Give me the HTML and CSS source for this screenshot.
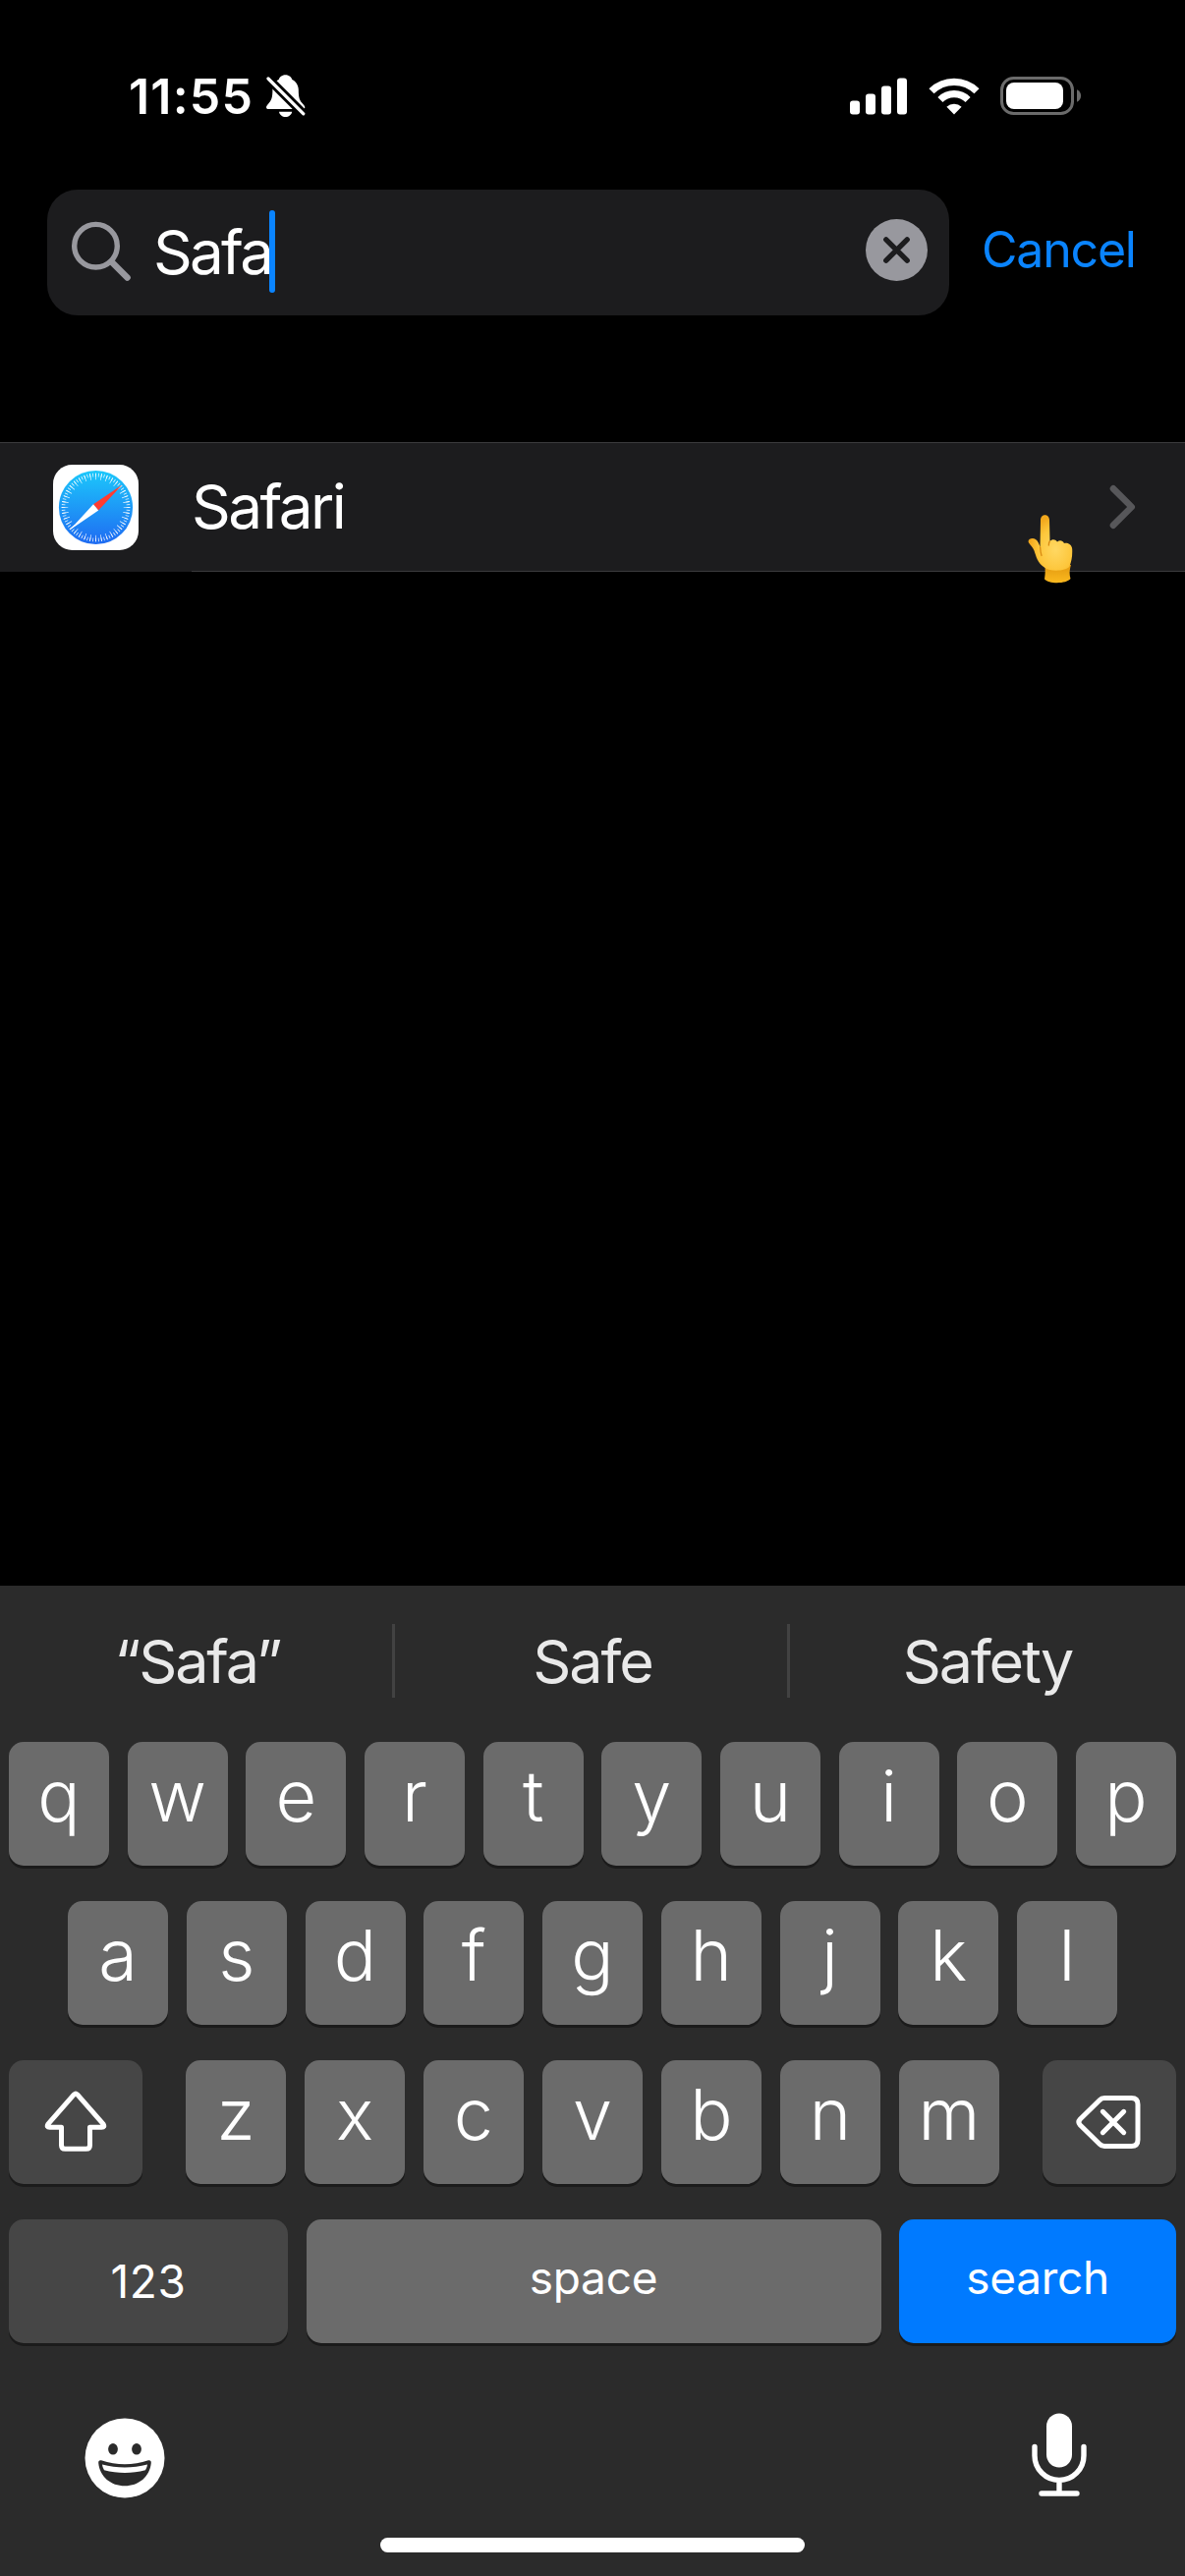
FILE: index.html
```html
<!DOCTYPE html>
<html lang="en">
<head>
<meta charset="utf-8">
<title>Settings search</title>
<link rel="stylesheet" href="styles.css">
</head>
<body>
<div class="screen">
  <header class="status">
    <span class="time">11:55</span>
    <svg class="bell" width="40" height="44" viewBox="0 0 40 44">
      <path fill="#fff" d="M19.5 0.2c-3.800 0-6.200 2.400-6.800 4.800C8.800 7 6.400 11 6.400 15.500c0 8-1.400 11-4.200 14C.6 31.300 0 32.200 0 33.200 0 34.400.8 35 2 35h35c1.200 0 2.300-.6 2.300-1.800 0-1-.6-1.900-2.300-3.700-3-3-4.200-6-4.200-14C32.700 11 30.300 7 26.300 5 25.700 2.600 23.300.2 19.500.2zM13 37.700h13.200c-.6 3.200-3.300 5.300-6.600 5.300S13.600 40.900 13 37.700z"/>
      <path stroke="#000" stroke-width="9" d="M-1 1L41 43"/>
      <path stroke="#fff" stroke-width="3.200" stroke-linecap="round" d="M2 4L37.800 39.800"/>
    </svg>
    <div class="indicators">
      <svg width="58" height="38" viewBox="0 0 58 38" fill="#fff">
        <rect x="0" y="23.500" width="10" height="14" rx="3"/>
        <rect x="16" y="16.500" width="10" height="21" rx="3"/>
        <rect x="32" y="8.500" width="10" height="29" rx="3"/>
        <rect x="48" y="0.500" width="10" height="37" rx="3"/>
      </svg>
      <svg class="wifi" width="52" height="38" viewBox="0 0 52 38">
        <g fill="none" stroke="#fff" stroke-width="7.200">
          <path d="M3 13.800a32.600 32.600 0 0 1 46 0"/>
          <path d="M11.900 22.500a20 20 0 0 1 28.200 0"/>
        </g>
        <path fill="#fff" d="M26 37.500l-7.600-7.800a11 11 0 0 1 15.200 0z"/>
      </svg>
      <svg class="battery" width="84" height="40" viewBox="0 0 84 40">
        <rect x="1.500" y="1.500" width="72" height="36" rx="12" fill="none" stroke="#6b6b6b" stroke-width="3"/>
        <rect x="6" y="6" width="58" height="27" rx="8" fill="#fff"/>
        <path fill="#6b6b6b" d="M78 13.200c2.500 1 4.100 3.400 4.100 6.300s-1.600 5.300-4.100 6.300z"/>
      </svg>
    </div>
  </header>

  <div class="search">
    <div class="field">
      <svg class="lens" width="62" height="62" viewBox="0 0 62 62" fill="none" stroke="#98989e">
        <circle cx="25.500" cy="25.200" r="21.800" stroke-width="5.400"/>
        <path d="M41.500 41.500L57.500 57.500" stroke-width="6.600" stroke-linecap="round"/>
      </svg>
      <span class="query">Safa</span>
      <span class="caret"></span>
      <svg class="clear" width="63" height="63" viewBox="0 0 63 63">
        <circle cx="31.500" cy="31.500" r="31.500" fill="#98989e"/>
        <path d="M20.800 20.800L42.200 42.200M42.200 20.800L20.800 42.200" stroke="#1c1c1e" stroke-width="5.400" stroke-linecap="round"/>
      </svg>
    </div>
    <span class="cancel">Cancel</span>
  </div>

  <main class="results">
    <div class="result">
      <svg class="app-icon" width="87" height="87" viewBox="0 0 87 87">
        <defs>
          <linearGradient id="sky" x1="0" y1="0" x2="0" y2="1">
            <stop offset="0" stop-color="#1cc8fb"/>
            <stop offset="1" stop-color="#1f6bf2"/>
          </linearGradient>
        </defs>
        <rect width="87" height="87" rx="19.500" fill="#fff"/>
        <circle cx="43.500" cy="43.500" r="37.600" fill="url(#sky)"/>
        <g fill="none" stroke="#fff" stroke-opacity="0.850">
          <circle cx="43.500" cy="43.500" r="33" stroke-width="3.600" pathLength="72" stroke-dasharray="0.280 0.720" stroke-dashoffset="0.140"/>
          <circle cx="43.500" cy="43.500" r="31.500" stroke-width="6.600" pathLength="36" stroke-dasharray="0.140 0.860" stroke-dashoffset="0.070"/>
        </g>
        <path fill="#ff3b30" d="M70.300 20.500L41 40.300 46.200 46.500z"/>
        <path fill="#fff" d="M16.900 66.500L41 40.300 46.200 46.500z"/>
      </svg>
      <div class="result-body">
        <span class="result-name">Safari</span>
        <svg class="chevron" width="28" height="46" viewBox="0 0 28 46">
          <path d="M4 4.300L22.700 23 4 41.700" fill="none" stroke="#57575a" stroke-width="6.600" stroke-linecap="round" stroke-linejoin="round"/>
        </svg>
      </div>
      <svg class="pointer" width="47" height="70" viewBox="0 0 47 70">
        <defs>
          <radialGradient id="skin" cx="0.620" cy="0.620" r="0.600">
            <stop offset="0" stop-color="#ffd863"/>
            <stop offset="0.650" stop-color="#fdc63b"/>
            <stop offset="1" stop-color="#f2a81d"/>
          </radialGradient>
          <linearGradient id="wrist" x1="0" y1="0" x2="0" y2="1">
            <stop offset="0" stop-color="#e39a10"/>
            <stop offset="1" stop-color="#fbb91f"/>
          </linearGradient>
        </defs>
        <path fill="url(#wrist)" d="M17.500 52c.3 5 .3 8-.5 13.500 4 5 22.500 5 26.500-.5-1.500-5-1-9 .5-14z"/>
        <path fill="url(#skin)" d="M13 5.500c0-7 9-7 9 0L22.500 27c2-2.500 5.500-2.500 7.500 .5 2.500-2 5.500-1.500 7 1.500 4-1 8 1.500 8.200 6 .3 7-.7 12-2.700 17.500-3 5-20 5.500-25 1.500C9.500 49 8.500 42 6.500 36.500 5 32.500 2.500 31 1 28.500c-2-3.500 3.500-6 7-3.500 2.500 2 3.500 4.500 4.500 8z"/>
        <path fill="none" stroke="#d98b12" stroke-width="1.300" stroke-linecap="round" d="M12.600 33c.2 3 .6 6 1.400 8.500M22.300 27c-.8 1-1 2.500-1 4"/>
      </svg>
    </div>
  </main>

  <section class="keyboard">
    <div class="suggestions">
      <span class="word">“Safa”</span>
      <span class="word">Safe</span>
      <span class="word">Safety</span>
    </div>
    <div class="keys">
      <div class="row">
        <span class="key">q</span><span class="key">w</span><span class="key">e</span><span class="key">r</span><span class="key">t</span><span class="key">y</span><span class="key">u</span><span class="key">i</span><span class="key">o</span><span class="key">p</span>
      </div>
      <div class="row row-home">
        <span class="key">a</span><span class="key">s</span><span class="key">d</span><span class="key">f</span><span class="key">g</span><span class="key">h</span><span class="key">j</span><span class="key">k</span><span class="key">l</span>
      </div>
      <div class="row">
        <span class="key dark side">
          <svg width="64" height="64" viewBox="0 0 64 64" fill="none" stroke="#fff" stroke-width="5" stroke-linejoin="round">
            <path d="M30.300 3.900Q32 2.200 33.700 3.900L60.200 34.200Q61.900 37.200 58.500 37.200H46.500V55.500Q46.500 59.300 42.700 59.300H21.300Q17.500 59.300 17.500 55.500V37.200H5.500Q2.100 37.200 3.800 34.200z"/>
          </svg>
        </span>
        <div class="row-letters">
          <span class="key">z</span><span class="key">x</span><span class="key">c</span><span class="key">v</span><span class="key">b</span><span class="key">n</span><span class="key">m</span>
        </div>
        <span class="key dark side">
          <svg class="delete" width="66" height="56" viewBox="0 0 66 56" fill="none" stroke="#fff" stroke-width="5" stroke-linejoin="round" stroke-linecap="round">
            <path d="M29 3.500H56.500Q63 3.500 63 10V46Q63 52.500 56.500 52.500H29Q26 52.500 24 50.300L4.300 31Q1.500 28 4.300 25L24 5.700Q26 3.500 29 3.500z"/>
            <path d="M27.300 17.300L48.700 38.700M48.700 17.300L27.300 38.700"/>
          </svg>
        </span>
      </div>
      <div class="row">
        <span class="key dark numbers">123</span>
        <span class="key space">space</span>
        <span class="key go">search</span>
      </div>
    </div>
    <div class="dock">
      <svg width="82" height="82" viewBox="0 0 82 82">
        <circle cx="41" cy="41" r="40.500" fill="#fff"/>
        <g fill="#2b2b2b">
          <ellipse cx="29" cy="31.800" rx="4.900" ry="5.800"/>
          <ellipse cx="53" cy="31.800" rx="4.900" ry="5.800"/>
          <path d="M17 43.200C33 48.500 49 48.500 65 43.200Q68 42.700 67.800 46C66.500 60 55 69.300 41 69.300S15.500 60 14.200 46Q14 42.700 17 43.200z"/>
        </g>
        <path fill="#fff" d="M18 47.500C33 51.500 49 51.500 64 47.500Q63.800 50.500 62 53.300C48 57 34 57 20 53.300Q18.200 50.500 18 47.500z"/>
      </svg>
      <svg width="58" height="86" viewBox="0 0 58 86">
        <rect x="16" y="0.500" width="26" height="55" rx="13" fill="#fff"/>
        <path d="M4 34.500V43.500a25 25 0 0 0 50 0V34.500M29 68.500V82M11 82H47" fill="none" stroke="#fff" stroke-width="5.400" stroke-linecap="round"/>
      </svg>
    </div>
    <div class="home-bar"></div>
  </section>
</div>
</body>
</html>
```

FILE: styles.css
```css
* { box-sizing: border-box; }

body {
  margin: 0;
  background: #000;
  color: #fff;
  font-family: Inter, "Liberation Sans", sans-serif;
}

svg { display: block; flex: none; }

.screen {
  display: flex;
  flex-direction: column;
  width: 1206px;
  height: 2622px;
  overflow: hidden;
}

/* status bar */
.status {
  display: flex;
  align-items: center;
  height: 193px;
  padding: 3px 104px 0 131px;
}

.time {
  width: 140px;
  font-size: 50px;
  font-weight: 600;
  letter-spacing: 1.2px;
  white-space: nowrap;
}

.indicators {
  display: flex;
  align-items: center;
  margin-left: auto;
}

.wifi { margin-left: 22px; }
.battery { margin-left: 21px; }

/* search bar */
.search {
  display: flex;
  align-items: center;
  height: 128px;
  padding-left: 48px;
}

.field {
  display: flex;
  align-items: center;
  width: 918px;
  height: 128px;
  padding: 0 22px 0 24px;
  border-radius: 31px;
  background: #1c1c1e;
}

.lens { margin-bottom: 2px; }

.query {
  width: 118px;
  margin-left: 22px;
  padding-bottom: 2px;
  font-size: 62px;
  letter-spacing: -2.8px;
  white-space: nowrap;
}

.caret {
  width: 6px;
  height: 84px;
  margin-bottom: 2px;
  border-radius: 3px;
  background: #0a84ff;
}

.clear {
  margin-left: auto;
  margin-bottom: 5px;
}

.cancel {
  padding: 0 0 7px 33px;
  color: #0a84ff;
  font-size: 50px;
  letter-spacing: -1.2px;
}

/* results */
.results {
  flex: 1;
  padding-top: 129px;
}

.result {
  position: relative;
  display: flex;
  align-items: center;
  height: 132px;
  padding-left: 54px;
  border-top: 1px solid #3b3b3d;
  background: #1c1c1e;
}

.result-body {
  display: flex;
  flex: 1;
  align-items: center;
  justify-content: space-between;
  height: 100%;
  margin-left: 54px;
  padding-right: 49px;
  border-bottom: 1px solid #3b3b3d;
}

.result-name {
  padding-bottom: 2px;
  font-size: 62px;
  letter-spacing: -2.6px;
}

.pointer {
  position: absolute;
  left: 1046px;
  top: 73px;
}

/* keyboard */
.keyboard {
  height: 1008px;
  background: #2b2b2b;
}

.suggestions {
  display: flex;
  align-items: center;
  height: 159px;
  padding-bottom: 6px;
}

.word {
  flex: 1;
  height: 75px;
  line-height: 77px;
  text-align: center;
  color: #e9e9e9;
  font-size: 61px;
  letter-spacing: -2.1px;
}

.word + .word { box-shadow: -3px 0 0 #424242; }

.keys {
  display: flex;
  flex-direction: column;
  gap: 36px;
  padding: 0 9px;
}

.row {
  display: flex;
  justify-content: space-between;
}

.row-home { padding: 0 60px; }

.row-letters {
  display: flex;
  justify-content: space-between;
  width: 828px;
}

.key {
  width: 102px;
  height: 126px;
  border-radius: 15px;
  background: #6b6b6b;
  box-shadow: 0 3px 0 #1b1b1b;
  font-size: 72px;
  font-weight: 350;
  line-height: 110px;
  text-align: center;
}

.dark { background: #464646; }

.side {
  display: flex;
  align-items: center;
  justify-content: center;
  width: 136px;
}

.delete { margin-right: 2px; }

.numbers,
.space,
.go {
  font-size: 46px;
  font-weight: 400;
  line-height: 119px;
}

.numbers {
  width: 284px;
  line-height: 127px;
  letter-spacing: 0.6px;
}

.space {
  width: 585px;
  letter-spacing: -0.3px;
}

.go {
  width: 282px;
  background: #007aff;
  letter-spacing: -0.3px;
}

.dock {
  display: flex;
  align-items: flex-start;
  justify-content: space-between;
  height: 198px;
  padding: 71px 99px 0 86px;
}

.dock svg:first-child { margin-top: 5px; }

.home-bar {
  width: 432px;
  height: 15px;
  margin: 0 auto;
  border-radius: 8px;
  background: #fff;
}
```
